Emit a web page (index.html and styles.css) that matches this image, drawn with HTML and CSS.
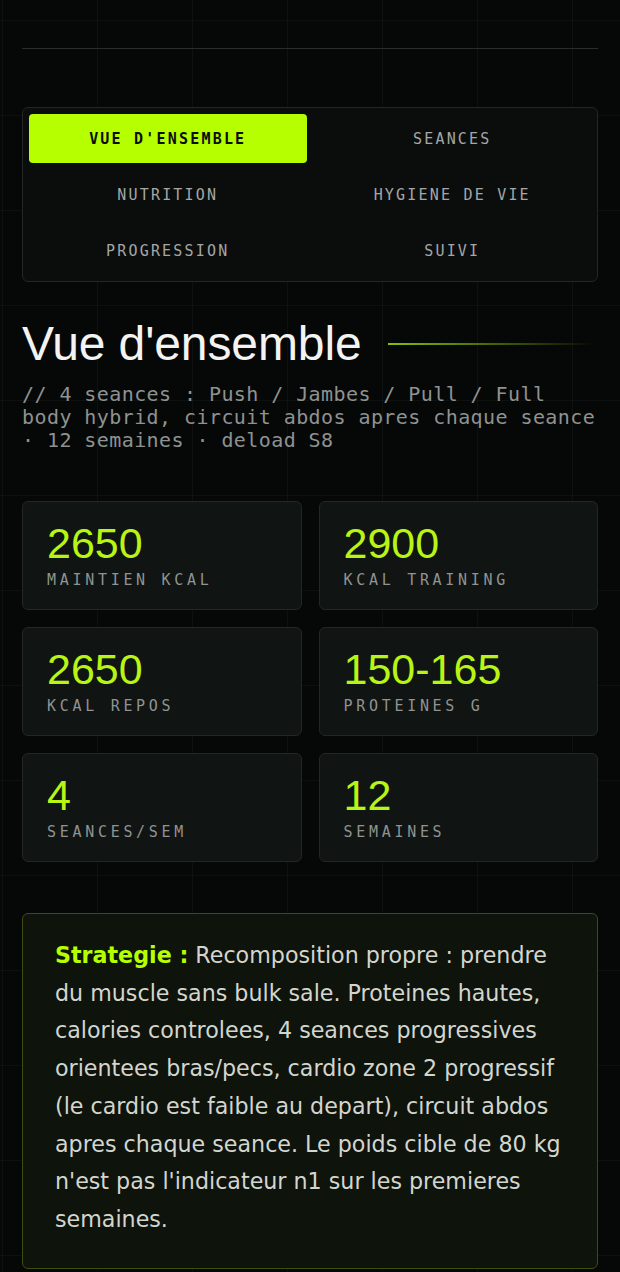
FILE: index.html
```html
<!DOCTYPE html>
<html lang="fr">
<head>
<meta charset="utf-8">
<title>Vue d'ensemble</title>
<link rel="stylesheet" href="styles.css">
</head>
<body>
<div class="page">
  <header class="topbar"></header>

  <nav class="tabs">
    <div class="tab active">VUE D'ENSEMBLE</div>
    <div class="tab">SEANCES</div>
    <div class="tab">NUTRITION</div>
    <div class="tab">HYGIENE DE VIE</div>
    <div class="tab">PROGRESSION</div>
    <div class="tab">SUIVI</div>
  </nav>

  <section class="overview">
    <div class="title-row">
      <h1 class="title">Vue d'ensemble</h1>
      <span class="title-line"></span>
    </div>
    <p class="subtitle">// 4 seances : Push / Jambes / Pull / Full body hybrid, circuit abdos apres chaque seance · 12 semaines · deload S8</p>

    <div class="stats">
      <div class="stat"><div class="stat-value">2650</div><div class="stat-label">MAINTIEN KCAL</div></div>
      <div class="stat"><div class="stat-value">2900</div><div class="stat-label">KCAL TRAINING</div></div>
      <div class="stat"><div class="stat-value">2650</div><div class="stat-label">KCAL REPOS</div></div>
      <div class="stat"><div class="stat-value">150-165</div><div class="stat-label">PROTEINES G</div></div>
      <div class="stat"><div class="stat-value">4</div><div class="stat-label">SEANCES/SEM</div></div>
      <div class="stat"><div class="stat-value">12</div><div class="stat-label">SEMAINES</div></div>
    </div>

    <div class="strategy">
      <p><strong>Strategie :</strong> Recomposition propre : prendre du muscle sans bulk sale. Proteines hautes, calories controlees, 4 seances progressives orientees bras/pecs, cardio zone 2 progressif (le cardio est faible au depart), circuit abdos apres chaque seance. Le poids cible de 80 kg n'est pas l'indicateur n1 sur les premieres semaines.</p>
    </div>
  </section>
</div>
</body>
</html>
```

FILE: styles.css
```css
html, body {
  margin: 0;
  padding: 0;
}

body {
  background-color: #060707;
  background-image:
    linear-gradient(to right, rgba(255,255,255,0.035) 1px, transparent 1px),
    linear-gradient(to bottom, rgba(255,255,255,0.03) 1px, transparent 1px);
  background-size: 95px 95px;
  background-position: 2px 20px;
  min-height: 1272px;
  font-family: "DejaVu Sans", sans-serif;
  color: #e8e9e6;
}

.page {
  padding: 0 22px 0 22px;
}

.topbar {
  height: 48px;
  border-bottom: 1px solid #2a2d2c;
}

.tabs {
  margin-top: 58px;
  display: grid;
  grid-template-columns: 1fr 1fr;
  grid-auto-rows: 49px;
  gap: 7px;
  padding: 6px;
  border: 1px solid #222625;
  border-radius: 6px;
  background: #0b0d0d;
}

.tab {
  display: flex;
  align-items: center;
  justify-content: center;
  font-family: "DejaVu Sans Mono", monospace;
  font-size: 15px;
  letter-spacing: 2.2px;
  color: #a4a7a6;
  border-radius: 4px;
}

.tab.active {
  background: #b6ff00;
  color: #0b0e06;
  font-weight: bold;
}

.overview {
  margin-top: 35px;
}

.title-row {
  display: flex;
  align-items: center;
  gap: 26px;
}

.title {
  margin: 0;
  font-family: "Liberation Sans", Arial, sans-serif;
  font-weight: normal;
  font-size: 48px;
  line-height: 53px;
  letter-spacing: -0.1px;
  color: #f3f4f2;
  white-space: nowrap;
}

.title-line {
  flex: 1;
  height: 2px;
  margin-right: 2px;
  background: linear-gradient(to right, rgba(182,255,0,0.75), rgba(182,255,0,0.3) 60%, rgba(182,255,0,0));
}

.subtitle {
  margin: 13px 0 0 0;
  font-family: "DejaVu Sans Mono", monospace;
  font-size: 20px;
  line-height: 23px;
  letter-spacing: 0.42px;
  color: #8e9290;
}

.stats {
  margin-top: 49px;
  display: grid;
  grid-template-columns: 1fr 1fr;
  gap: 17px;
}

.stat {
  background: #101413;
  border: 1px solid #222726;
  border-radius: 6px;
  padding: 20px 24px 20px 24px;
}

.stat-value {
  font-family: "Liberation Sans", Arial, sans-serif;
  font-size: 43px;
  line-height: 43px;
  color: #b8f514;
}

.stat-label {
  margin-top: 6px;
  font-family: "DejaVu Sans Mono", monospace;
  font-size: 15px;
  line-height: 18px;
  letter-spacing: 3.7px;
  color: #8f9391;
}

.strategy {
  margin-top: 51px;
  border: 1px solid #3c4d12;
  border-radius: 6px;
  background: #0e130b;
  padding: 23px 32px 29px 32px;
}

.strategy p {
  margin: 0;
  font-family: "DejaVu Sans", sans-serif;
  font-size: 22.2px;
  line-height: 37.7px;
  color: #d3d6cf;
}

.strategy strong {
  color: #b6ff00;
  font-weight: bold;
}
```
